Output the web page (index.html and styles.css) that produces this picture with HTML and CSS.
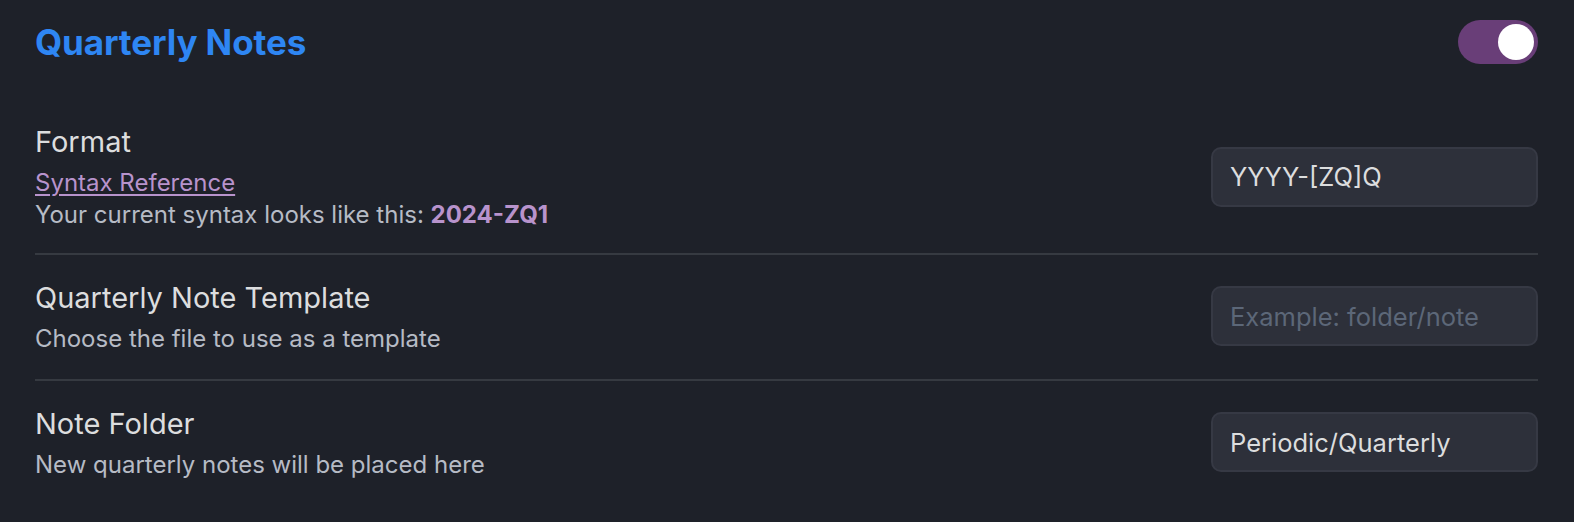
FILE: index.html
```html
<!DOCTYPE html>
<html lang="en">
<head>
<meta charset="utf-8">
<title>Quarterly Notes</title>
<link rel="stylesheet" href="styles.css">
</head>
<body>
<div class="panel">
  <div class="heading-row">
    <h3 class="heading">Quarterly Notes</h3>
    <div class="toggle is-on"><span class="knob"></span></div>
  </div>

  <div class="setting first">
    <div class="info">
      <div class="name">Format</div>
      <div class="desc">
        <a class="link" href="#">Syntax Reference</a><br>
        Your current syntax looks like this: <b class="accent">2024-ZQ1</b>
      </div>
    </div>
    <div class="control"><input class="text-input" type="text" value="YYYY-[ZQ]Q"></div>
  </div>

  <div class="setting">
    <div class="info">
      <div class="name">Quarterly Note Template</div>
      <div class="desc">Choose the file to use as a template</div>
    </div>
    <div class="control"><input class="text-input" type="text" placeholder="Example: folder/note"></div>
  </div>

  <div class="setting">
    <div class="info">
      <div class="name">Note Folder</div>
      <div class="desc">New quarterly notes will be placed here</div>
    </div>
    <div class="control"><input class="text-input" type="text" value="Periodic/Quarterly"></div>
  </div>
</div>
</body>
</html>
```

FILE: styles.css
```css
html, body {
  margin: 0;
  padding: 0;
  background: #1e2129;
}
body {
  font-family: Inter, "Noto Sans", "Liberation Sans", sans-serif;
  color: #dcddde;
}
.panel {
  padding: 20px 36px 0 35px;
}
.heading-row {
  display: flex;
  align-items: center;
  justify-content: space-between;
  height: 44px;
  margin-bottom: 34px;
}
.heading {
  margin: 0;
  font-size: 35px;
  font-weight: 700;
  color: #2e86f3;
  letter-spacing: -0.1px;
}
.toggle {
  width: 80px;
  height: 44px;
  border-radius: 22px;
  background: #693e78;
  display: flex;
  align-items: center;
  justify-content: flex-end;
  padding: 0 4px;
  box-sizing: border-box;
}
.knob {
  width: 36px;
  height: 36px;
  border-radius: 50%;
  background: #ffffff;
}
.setting {
  display: flex;
  align-items: center;
  justify-content: space-between;
  padding: 23px 0 24px;
  border-top: 2px solid #363a41;
}
.setting.first {
  border-top: none;
  padding: 24px 0 22px;
}
.setting:not(.first) .control {
  margin-bottom: 1px;
}
.info {
  display: flex;
  flex-direction: column;
}
.name {
  font-size: 29px;
  line-height: 39px;
  color: #dcddde;
}
.desc {
  margin-top: 6px;
  font-size: 24px;
  line-height: 32px;
  color: #b6bbc5;
}
.link {
  color: #b893cc;
  text-decoration: underline;
  text-decoration-thickness: 2px;
  text-underline-offset: 3px;
}
.accent {
  color: #b893cc;
  font-weight: 700;
}
.text-input {
  width: 327px;
  height: 60px;
  box-sizing: border-box;
  padding: 0 17px;
  border: 2px solid #363944;
  border-radius: 10px;
  background: #2d303a;
  color: #dcddde;
  font-family: Inter, "Noto Sans", "Liberation Sans", sans-serif;
  font-size: 25.5px;
  outline: none;
}
.text-input::placeholder {
  color: #5c6778;
}
```
